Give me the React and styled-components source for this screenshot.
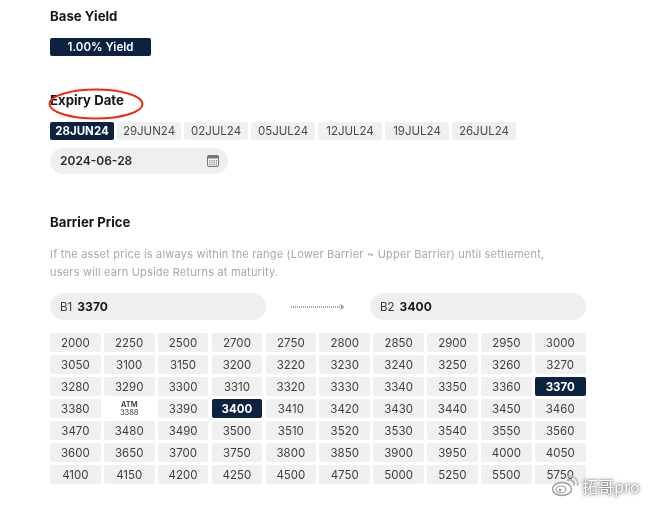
import React from "react";
import styled, { createGlobalStyle } from "styled-components";

const GlobalStyle = createGlobalStyle`
    html, body {
        margin: 0;
        padding: 0;
        background: #fff;
        font-family: Inter, "Liberation Sans", sans-serif;
    }
`;

const Page = styled.div`
    position: relative;
    width: 648px;
    height: 505px;
    overflow: hidden;
    padding: 9px 0 0 50px;
    box-sizing: border-box;
    color: #14161a;
    filter: blur(0.3px);
`;

const Title = styled.h2`
    margin: 0;
    font-size: 13.2px;
    line-height: 15px;
    font-weight: 700;
`;

const YieldBadge = styled.div`
    width: 101px;
    height: 18px;
    margin: 14px 0 37px;
    border-radius: 2px;
    background: #0b2340;
    color: #fff;
    font-size: 11.5px;
    font-weight: 600;
    line-height: 18px;
    text-align: center;
`;

const DateRow = styled.div`
    display: flex;
    gap: 3px;
    margin-top: 14px;
`;

const DateChip = styled.div`
    width: 64px;
    height: 18px;
    border-radius: 2px;
    background: ${(props) => (props.active ? "#0b2340" : "#f0f0f0")};
    color: ${(props) => (props.active ? "#fff" : "#4a4a4a")};
    font-size: 11.5px;
    font-weight: ${(props) => (props.active ? 700 : 400)};
    line-height: 18px;
    text-align: center;
`;

const DateInput = styled.div`
    display: flex;
    align-items: center;
    justify-content: space-between;
    width: 178px;
    height: 26px;
    margin: 8px 0 41px;
    padding: 0 9px 1px 10px;
    box-sizing: border-box;
    border-radius: 13px;
    background: #efefef;
    font-size: 12px;
    font-weight: 600;
    color: #26282c;
`;

const Description = styled.p`
    width: 510px;
    margin: 15px 0 12px;
    color: #a8a8a8;
    font-size: 11px;
    line-height: 18px;
    letter-spacing: 0.2px;
`;

const BarrierRow = styled.div`
    display: flex;
    align-items: center;
    width: 536px;
    margin-bottom: 13px;
`;

const BarrierInput = styled.div`
    flex: 0 0 216px;
    height: 27px;
    padding-left: 10px;
    box-sizing: border-box;
    border-radius: 13.5px;
    background: #efefef;
    color: #3a3a3a;
    font-size: 11.5px;
    line-height: 27px;
    b {
        margin-left: 5px;
        font-size: 12px;
        font-weight: 700;
        color: #16181c;
        letter-spacing: 0.1px;
    }
`;

const ArrowBox = styled.div`
    flex: 1;
    display: flex;
    justify-content: center;
`;

const PriceGrid = styled.div`
    display: grid;
    grid-template-columns: repeat(10, 50.7px);
    grid-auto-rows: 19px;
    column-gap: 3.2px;
    row-gap: 3px;
`;

const PriceCell = styled.div`
    display: flex;
    align-items: center;
    justify-content: center;
    border-radius: 2px;
    background: ${(props) => (props.active ? "#0b2340" : "#f0f0f0")};
    color: ${(props) => (props.active ? "#fff" : "#3f3f3f")};
    font-size: 11.5px;
    font-weight: ${(props) => (props.active ? 700 : 400)};
`;

const AtmCell = styled.div`
    display: flex;
    flex-direction: column;
    align-items: center;
    justify-content: center;
    color: #3a3a3a;
    font-size: 7.5px;
    line-height: 8px;
    b {
        font-weight: 600;
    }
`;

const Annotation = styled.svg`
    position: absolute;
    left: 47px;
    top: 86px;
`;

const Watermark = styled.div`
    position: absolute;
    left: 551px;
    top: 475px;
    display: flex;
    align-items: center;
    gap: 3px;
    color: #fff;
    font-family: "Noto Sans CJK SC", Inter, sans-serif;
    font-size: 16px;
    line-height: 22px;
    text-shadow: 0 0 2px rgba(70, 70, 70, 0.9), 0 0 4px rgba(90, 90, 90, 0.7);
`;

const dates = ["28JUN24", "29JUN24", "02JUL24", "05JUL24", "12JUL24", "19JUL24", "26JUL24"];

const prices = [
    2000, 2250, 2500, 2700, 2750, 2800, 2850, 2900, 2950, 3000,
    3050, 3100, 3150, 3200, 3220, 3230, 3240, 3250, 3260, 3270,
    3280, 3290, 3300, 3310, 3320, 3330, 3340, 3350, 3360, 3370,
    3380, "ATM", 3390, 3400, 3410, 3420, 3430, 3440, 3450, 3460,
    3470, 3480, 3490, 3500, 3510, 3520, 3530, 3540, 3550, 3560,
    3600, 3650, 3700, 3750, 3800, 3850, 3900, 3950, 4000, 4050,
    4100, 4150, 4200, 4250, 4500, 4750, 5000, 5250, 5500, 5750,
];

function CalendarIcon() {
    return (
        <svg width="12" height="12" viewBox="0 0 12 12">
            <rect x="0.5" y="0.5" width="11" height="11" rx="1.5" fill="#f4f4f4" stroke="#77797d" />
            <rect x="0.5" y="0.5" width="11" height="3" fill="#77797d" />
            {[2.2, 4.4, 6.6, 8.8].map((x) =>
                [5.2, 7.2, 9.2].map((y) => (
                    <rect key={x + "-" + y} x={x} y={y} width="1.2" height="1.1" fill="#77797d" />
                ))
            )}
        </svg>
    );
}

function DottedArrow() {
    return (
        <svg width="56" height="8" viewBox="0 0 56 8">
            <line x1="1" y1="4" x2="52" y2="4" stroke="#44464a" strokeWidth="1" strokeDasharray="1 1" />
            <path d="M50.5 1.5L53.5 4L50.5 6.5" fill="none" stroke="#44464a" strokeWidth="0.8" />
        </svg>
    );
}

function WeiboIcon() {
    return (
        <svg width="28" height="22" viewBox="0 0 28 22" fill="none">
            <ellipse cx="11" cy="14" rx="9.5" ry="6.5" fill="#fff" stroke="#9a9a9a" strokeWidth="1.4" />
            <ellipse cx="10" cy="14.5" rx="5" ry="3.5" stroke="#9a9a9a" strokeWidth="1.2" />
            <circle cx="9" cy="15" r="1.5" fill="#9a9a9a" />
            <path d="M16 5.5C20 3.5 24 6 23 10.5" stroke="#aaaaaa" strokeWidth="1.6" />
            <path d="M16 1.5C22 -0.5 28 4 26.5 11" stroke="#bbbbbb" strokeWidth="1.6" />
        </svg>
    );
}

export default function App() {
    return (
        <Page>
            <GlobalStyle />
            <Title>Base Yield</Title>
            <YieldBadge>1.00% Yield</YieldBadge>

            <Title>Expiry Date</Title>
            <DateRow>
                {dates.map((d, i) => (
                    <DateChip key={d} active={i === 0}>{d}</DateChip>
                ))}
            </DateRow>
            <DateInput>
                2024-06-28
                <CalendarIcon />
            </DateInput>

            <Title>Barrier Price</Title>
            <Description>
                If the asset price is always within the range (Lower Barrier ~ Upper Barrier) until settlement,
                users will earn Upside Returns at maturity.
            </Description>
            <BarrierRow>
                <BarrierInput>B1<b>3370</b></BarrierInput>
                <ArrowBox><DottedArrow /></ArrowBox>
                <BarrierInput>B2<b>3400</b></BarrierInput>
            </BarrierRow>
            <PriceGrid>
                {prices.map((p) =>
                    p === "ATM" ? (
                        <AtmCell key={p}><b>ATM</b>3388</AtmCell>
                    ) : (
                        <PriceCell key={p} active={p === 3370 || p === 3400}>{p}</PriceCell>
                    )
                )}
            </PriceGrid>

            <Annotation width="100" height="36" viewBox="0 0 100 36">
                <ellipse cx="49" cy="18" rx="46.5" ry="14.5" fill="none" stroke="#ee2a14" strokeWidth="2" />
            </Annotation>
            <Watermark>
                <WeiboIcon />
                <span>拓哥pro</span>
            </Watermark>
        </Page>
    );
}
